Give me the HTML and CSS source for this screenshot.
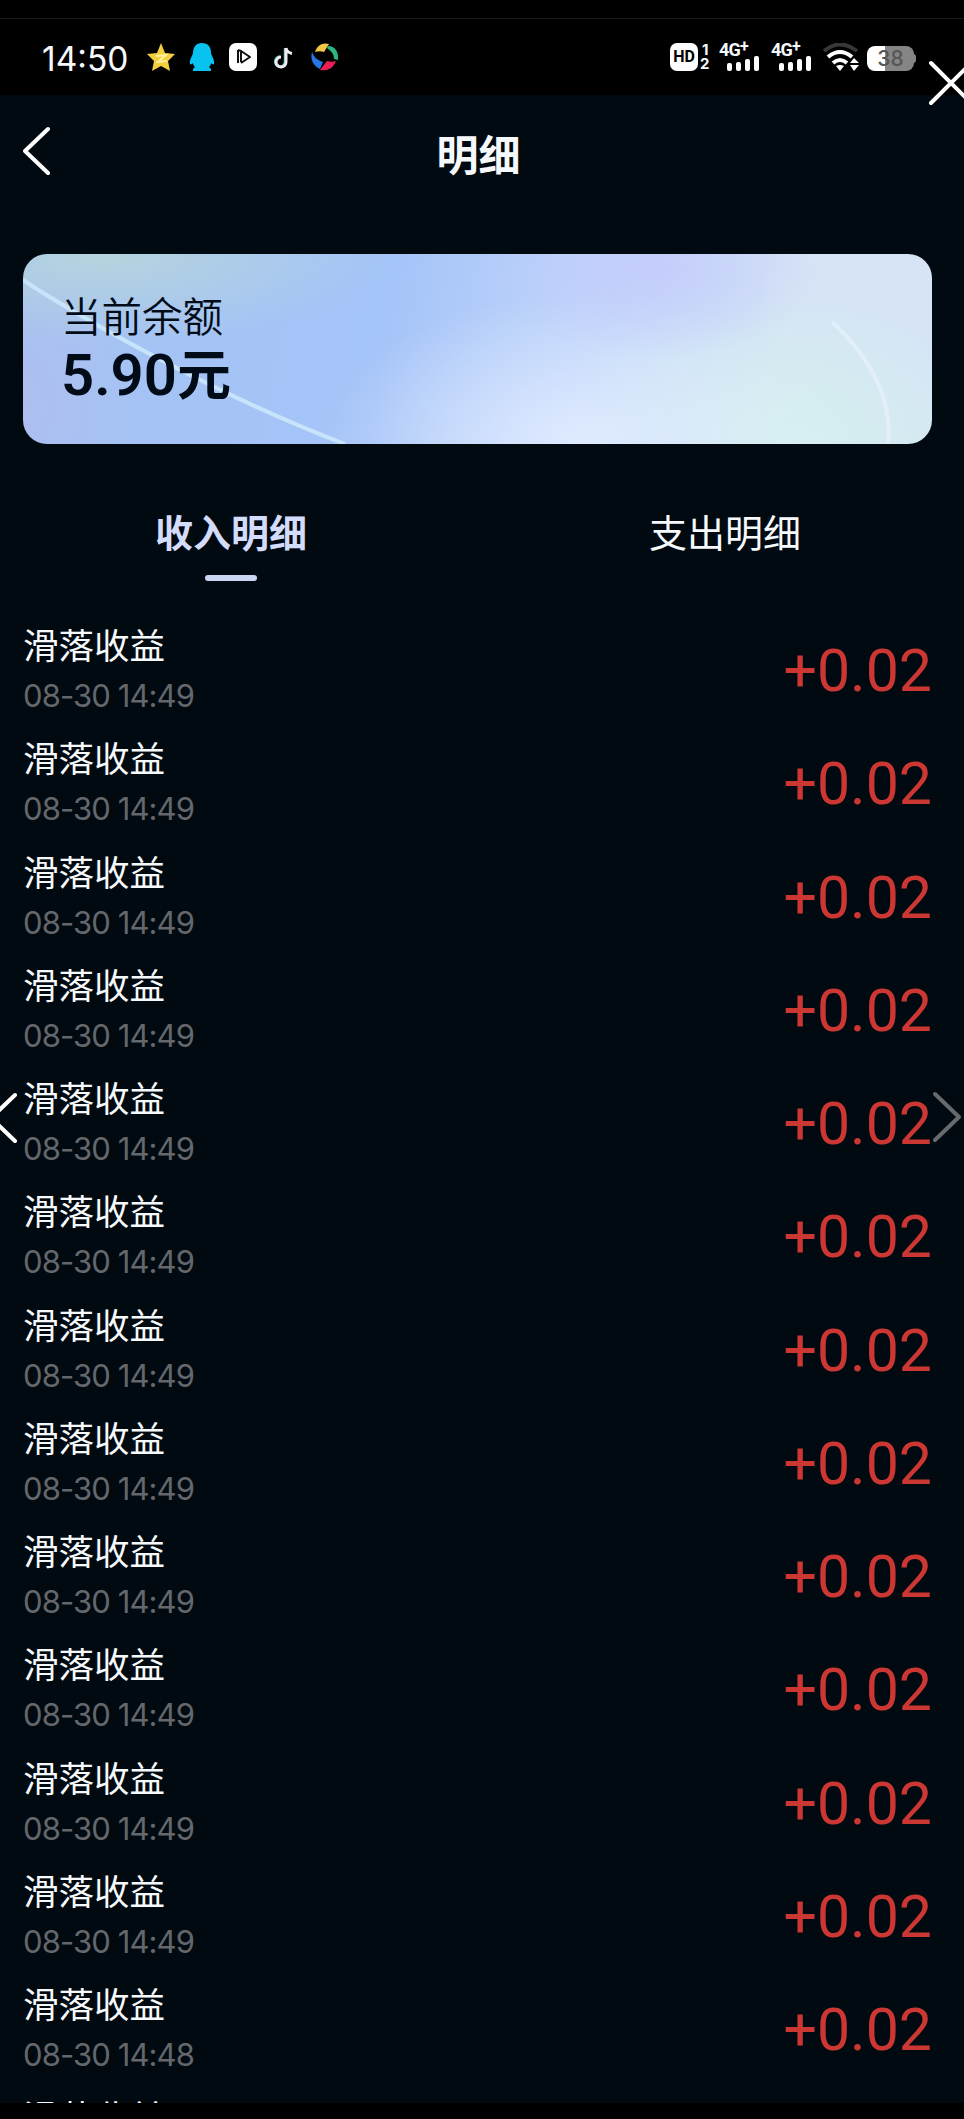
FILE: index.html
```html
<!DOCTYPE html>
<html lang="zh-CN">
<head>
  <meta charset="UTF-8">
  <title>明细</title>
  <link rel="stylesheet" href="styles.css">
</head>
<body>

  <div class="status-bar">
    <div class="status-left">
      <span class="clock">14:50</span>
      <div class="app-icons">
        <svg width="28" height="28" viewBox="0 0 28 28">
          <path d="M14 0l4 10 10 1-7 7 2 10-9-5-9 5 2-10-7-7 10-1z" fill="#f3cf3c"/>
          <path d="M9 13l10-1-8 7 9-1" fill="none" stroke="#fff0a0" stroke-width="2"/>
        </svg>
        <svg width="28" height="28" viewBox="0 0 28 28">
          <path d="M14 0c6 0 9 4 9 10 1 4 4 7 3 11-1 1-2 0-3-1 0 2-1 3-2 4l2 2v2H5v-2l2-2c-1-1-2-2-2-4-1 1-2 2-3 1-1-4 2-7 3-11 0-6 3-10 9-10z" fill="#08c2f0"/>
        </svg>
        <svg width="28" height="28" viewBox="0 0 28 28">
          <rect width="28" height="28" rx="7" fill="#fff"/>
          <path d="M9 7v13M9 7l3 1v11M12 8l9 6-9 6" fill="none" stroke="#111" stroke-width="2" stroke-linejoin="round"/>
        </svg>
        <svg width="28" height="28" viewBox="0 0 28 28">
          <path d="M15 5v13a5 5 0 1 1-5-4.500" fill="none" stroke="#27bdc0" stroke-width="2.500"/>
          <path d="M16 5v13.500a5 5 0 1 1-5-4.500M16 5c1 4 3 5 6 5.500" fill="none" stroke="#f4e9ee" stroke-width="3"/>
        </svg>
        <svg width="28" height="28" viewBox="0 0 28 28">
          <path d="M4 9C6 2 12-1 18 1l-5 8c-3-1-6-1-9 0z" fill="#f2c744"/>
          <path d="M17 3c7 0 11 6 10 14l-4-1c0-5-3-8-7-11z" fill="#2db67c"/>
          <path d="M25 18c-3 8-9 10-16 9l7-9c4 1 6 1 9 0z" fill="#ec1f55"/>
          <path d="M1 9c2 5 5 8 11 10l-3 7C2 23-1 16 1 9z" fill="#2875e8"/>
        </svg>
      </div>
    </div>
    <div class="status-right">
      <span class="hd">HD</span>
      <span class="sim"><b>1</b><b>2</b></span>
      <div class="signal">
        <span>4G<sup>+</sup></span>
        <div class="bars"><i class="b1"></i><i class="b2"></i><i class="b3"></i><i class="b4"></i></div>
      </div>
      <div class="signal">
        <span>4G<sup>+</sup></span>
        <div class="bars"><i class="b1"></i><i class="b2"></i><i class="b3"></i><i class="b4"></i></div>
      </div>
      <svg class="wifi" width="36" height="28" viewBox="0 0 36 28">
        <path d="M1 8Q17-5 34 8" fill="none" stroke="#383838" stroke-width="4"/>
        <path d="M5 14Q17 4 29 14" fill="none" stroke="#fff" stroke-width="4"/>
        <path d="M10 20q7-6 14 0" fill="none" stroke="#fff" stroke-width="4"/>
        <path d="M13 23q4-2 8 0l-4 5zM27 20l4-5 5 5zM27 22h9l-5 6z" fill="#fff"/>
      </svg>
      <span class="battery">38</span>
    </div>
  </div>

  <div class="page">
    <div class="header">
      <svg class="back" width="30" height="50" viewBox="0 0 30 50">
        <path d="M25 3L2 25l23 22" fill="none" stroke="#fff" stroke-width="4" stroke-linecap="round" stroke-linejoin="round"/>
      </svg>
      <h1>明细</h1>
    </div>

    <div class="card">
      <svg class="card-lines" width="909" height="190" viewBox="0 0 909 190">
        <path d="M0 26C75 75 210 148 322 190" fill="none" stroke="#c8e4fb" stroke-width="4"/>
        <path d="M809 68C850 105 870 150 865 190" fill="none" stroke="#e2effa" stroke-width="4"/>
      </svg>
      <div class="card-label">当前余额</div>
      <div class="card-money">5.90<span>元</span></div>
    </div>

    <div class="tabs">
      <div class="tab active">收入明细</div>
      <div class="tab">支出明细</div>
    </div>

    <div class="list">
      <div class="row"><div><p class="name">滑落收益</p><p class="time">08-30 14:49</p></div><span class="amount">+0.02</span></div>
      <div class="row"><div><p class="name">滑落收益</p><p class="time">08-30 14:49</p></div><span class="amount">+0.02</span></div>
      <div class="row"><div><p class="name">滑落收益</p><p class="time">08-30 14:49</p></div><span class="amount">+0.02</span></div>
      <div class="row"><div><p class="name">滑落收益</p><p class="time">08-30 14:49</p></div><span class="amount">+0.02</span></div>
      <div class="row"><div><p class="name">滑落收益</p><p class="time">08-30 14:49</p></div><span class="amount">+0.02</span></div>
      <div class="row"><div><p class="name">滑落收益</p><p class="time">08-30 14:49</p></div><span class="amount">+0.02</span></div>
      <div class="row"><div><p class="name">滑落收益</p><p class="time">08-30 14:49</p></div><span class="amount">+0.02</span></div>
      <div class="row"><div><p class="name">滑落收益</p><p class="time">08-30 14:49</p></div><span class="amount">+0.02</span></div>
      <div class="row"><div><p class="name">滑落收益</p><p class="time">08-30 14:49</p></div><span class="amount">+0.02</span></div>
      <div class="row"><div><p class="name">滑落收益</p><p class="time">08-30 14:49</p></div><span class="amount">+0.02</span></div>
      <div class="row"><div><p class="name">滑落收益</p><p class="time">08-30 14:49</p></div><span class="amount">+0.02</span></div>
      <div class="row"><div><p class="name">滑落收益</p><p class="time">08-30 14:49</p></div><span class="amount">+0.02</span></div>
      <div class="row"><div><p class="name">滑落收益</p><p class="time">08-30 14:48</p></div><span class="amount">+0.02</span></div>
      <div class="row"><div><p class="name">滑落收益</p></div></div>
    </div>
  </div>

  <!-- viewer controls -->
  <svg class="viewer close" width="46" height="46" viewBox="0 0 46 46">
    <path d="M3 3l40 40M43 3L3 43" stroke="#fff" stroke-width="4" stroke-linecap="round"/>
  </svg>
  <svg class="viewer prev" width="30" height="52" viewBox="0 0 30 52">
    <path d="M27 3L3 26l24 23" fill="none" stroke="#fff" stroke-width="4" stroke-linecap="round"/>
  </svg>
  <svg class="viewer next" width="30" height="52" viewBox="0 0 30 52">
    <path d="M3 3l24 23L3 49" fill="none" stroke="#686b6d" stroke-width="4" stroke-linecap="round" stroke-linejoin="round"/>
  </svg>

</body>
</html>
```
FILE: styles.css
```css
* {
  box-sizing: border-box;
}

body {
  margin: 0;
  position: relative;
  width: 964px;
  height: 2119px;
  overflow: hidden;
  background: #000;
  color: #f6f9fc;
  font-family: Inter, "Noto Sans CJK SC", sans-serif;
}

p, h1 {
  margin: 0;
}

svg {
  display: block;
}

/* status bar */
.status-bar {
  display: flex;
  justify-content: space-between;
  height: 77px;
  margin-top: 18px;
  padding: 25px 48px 0 42px;
  border-top: 1px solid #1c1c1c;
}

.status-left, .app-icons, .status-right {
  display: flex;
}

.clock {
  width: 105px;
  font-size: 33.500px;
  line-height: 30px;
}

.app-icons {
  gap: 13px;
  margin-top: -1px;
}

.status-right {
  height: 28px;
  margin-top: -1px;
}

.hd {
  width: 28px;
  height: 28px;
  border-radius: 7px;
  background: #fff;
  color: #000;
  font: bold 16px/28px Roboto, sans-serif;
  text-align: center;
}

.sim {
  display: flex;
  flex-direction: column;
  width: 21px;
  padding-left: 2px;
  font-size: 15px;
  line-height: 15px;
}

.sim b:first-child {
  padding-left: 2px;
  line-height: 13px;
}

.signal {
  width: 41px;
  margin-right: 11px;
}

.signal span {
  display: block;
  height: 13px;
  font: bold 18px/14px Roboto, sans-serif;
  letter-spacing: -0.8px;
  white-space: nowrap;
}

.signal sup {
  font-size: 16px;
  line-height: 0;
  vertical-align: 4px;
}

.bars {
  display: flex;
  align-items: flex-end;
  gap: 4px;
  height: 15px;
  padding-left: 8px;
}

.bars i {
  width: 5px;
  border-radius: 2px;
  background: #fff;
}

.b1 { height: 8px; }
.b2 { height: 9px; }
.b3 { height: 12px; }
.b4 { height: 15px; }

.wifi {
  margin-right: 8px;
}

.battery {
  width: 47px;
  height: 25px;
  margin: 3px 2px 0 0;
  border-radius: 8px;
  background: linear-gradient(90deg, #fff 39%, #858585 39%);
  color: #555;
  font: 500 21px/26px Inter, sans-serif;
  text-align: center;
  position: relative;
}

.battery::after {
  content: "";
  position: absolute;
  right: -2px;
  top: 8px;
  width: 3px;
  height: 9px;
  border-radius: 0 3px 3px 0;
  background: #858585;
}

/* page */
.page {
  height: 2008px;
  padding: 0 32px 0 23px;
  overflow: hidden;
  background: #010a10;
}

.header {
  display: flex;
  align-items: center;
  height: 118px;
}

.back {
  margin-top: -7px;
}

.header h1 {
  flex: 1;
  padding: 3px 28px 0 0;
  font-size: 42px;
  line-height: 60px;
  font-weight: bold;
  text-align: center;
}

.card {
  position: relative;
  height: 190px;
  margin-top: 41px;
  padding: 42px 0 0 38px;
  border-radius: 24px;
  overflow: hidden;
  color: #020c18;
  background:
    radial-gradient(ellipse 170px 90px at 630px 15px, #c4c8fdbb, transparent),
    radial-gradient(ellipse 260px 150px at 560px 190px, #dfeaff, transparent),
    radial-gradient(ellipse 230px 150px at 755px 190px, #d4f1ec, transparent),
    radial-gradient(ellipse 280px 90px at 80px 0, #b5d4dd, transparent),
    radial-gradient(ellipse 110px 150px at 0 150px, #b3bdedaa, transparent),
    linear-gradient(100deg, #a4c2f2 0%, #a5c4f8 40%, #bed4fa 60%, #d5e4f5 82%, #d6e4f6 100%);
}

.card-lines {
  position: absolute;
  left: 0;
  top: 0;
}

.card-label, .card-money {
  position: relative;
}

.card-label {
  font-size: 40.500px;
  line-height: 44px;
  font-weight: 350;
}

.card-money {
  font-family: Roboto, "Noto Sans CJK SC", sans-serif;
  font-size: 58px;
  line-height: 70px;
  font-weight: 600;
}

.card-money span {
  font-size: 54px;
  font-weight: bold;
}

.tabs {
  display: flex;
  justify-content: space-between;
  margin: 63px 19px 0;
  padding: 0 112px 0 113px;
}

.tab {
  height: 74px;
  font-size: 38px;
  line-height: 52px;
}

.active {
  color: #d3dcfb;
  font-weight: bold;
}

.active::after {
  content: "";
  display: block;
  width: 52px;
  height: 6px;
  margin: 16px auto 0;
  border-radius: 3px;
  background: #cbd5f3;
}

.list {
  padding-top: 40px;
}

.row {
  display: flex;
  justify-content: space-between;
  height: 113.250px;
}

.name {
  font-size: 35.500px;
  line-height: 52px;
}

.time {
  color: #64676b;
  font-size: 31px;
  line-height: 46px;
  letter-spacing: -0.9px;
}

.amount {
  color: #cc3733;
  font: 400 59px/100px Roboto, sans-serif;
}

/* viewer controls */
.viewer {
  position: absolute;
}

.close {
  left: 928px;
  top: 60px;
}

.prev {
  left: -12px;
  top: 1092px;
}

.next {
  left: 932px;
  top: 1091px;
}
```
